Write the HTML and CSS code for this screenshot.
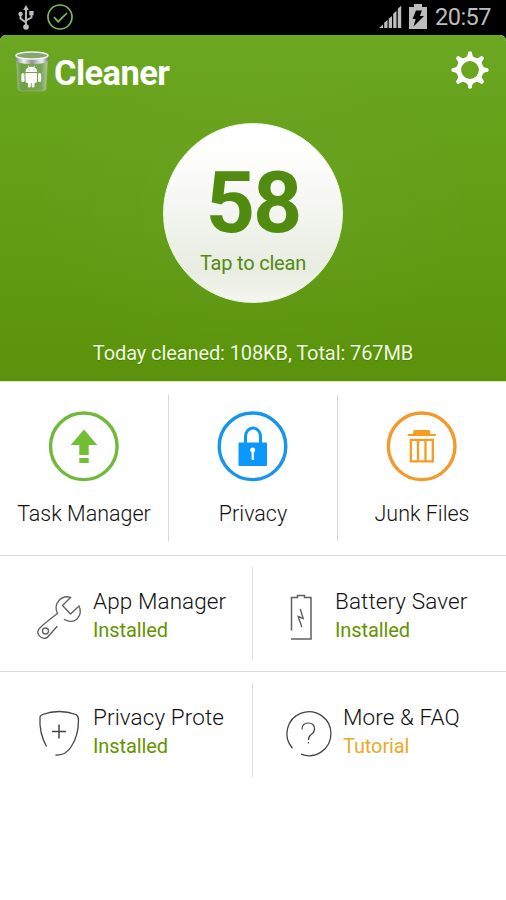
FILE: index.html
```html
<!DOCTYPE html>
<html lang="en">
<head>
<meta charset="utf-8">
<title>Cleaner</title>
<link rel="stylesheet" href="styles.css">
</head>
<body>
<header class="status">
  <svg class="usb" width="18" height="28" viewBox="17 3 18 28" fill="none" stroke="#bdbdbd" stroke-width="1.9">
    <path d="M26 27V8M26 22.500L20.500 18.500V14M26 20.500L31.500 17.500V12"/>
    <path d="M26 5l2.8 5h-5.6z" fill="#bdbdbd" stroke="none"/>
    <circle cx="26" cy="27" r="2.8" fill="#bdbdbd" stroke="none"/><circle cx="20.500" cy="14" r="2.200" fill="#bdbdbd" stroke="none"/>
    <path d="M29.300 11h4.300v4.300h-4.300z" fill="#bdbdbd" stroke="none"/>
  </svg>
  <svg class="check" width="28" height="28" viewBox="46 3 28 28" fill="none" stroke="#7cb955">
    <circle cx="60" cy="17" r="12" stroke-width="1.7"/><path d="M54 17.2l4.2 4.5 8.800-8.700" stroke-width="1.7"/>
  </svg>
  <svg class="signal" width="23" height="24" viewBox="379 5 23 24" fill="#bdbdbd">
    <path d="M379 28l4-3.500V28zM384.200 22.800l3.300-2.800v8h-3.300zM388.700 18.800l3.300-2.800v12h-3.300zM393.200 13.800l3.300-3V28h-3.300zM397.800 8.800l3.400-3V28h-3.400z"/>
  </svg>
  <svg class="charge" width="18" height="26" viewBox="409 3 18 26">
    <path d="M414 4h8v3h5v22h-18V7h5z" fill="#bdbdbd"/><path d="M416 10.500h6L419.800 16h4.200L413.500 26.500l2.200-7.500h-3.200z" fill="#000"/>
  </svg>
  <span class="clock">20:57</span>
</header>
<main>
  <section class="hero">
    <div class="titlebar">
      <svg class="jar" width="36" height="44" viewBox="14 49 36 44">
        <defs>
          <linearGradient id="glass"><stop offset="0" stop-color="#92b672"/><stop offset=".15" stop-color="#70a044"/><stop offset=".8" stop-color="#79a654"/><stop offset="1" stop-color="#b3c9a1"/></linearGradient>
          <linearGradient id="lid"><stop offset="0" stop-color="#858585"/><stop offset=".25" stop-color="#f1f1f1"/><stop offset=".5" stop-color="#929292"/><stop offset=".8" stop-color="#f0f0f0"/><stop offset="1" stop-color="#777"/></linearGradient>
        </defs>
        <path d="M16.500 60L18 89q0 2 4 2h20q4 0 4-2L47.500 60z" fill="url(#glass)" stroke="#9dba87" stroke-width=".6"/>
        <path d="M15.500 55v4.500q0 4.500 16.500 4.500t16.500-4.500V55z" fill="url(#lid)"/>
        <ellipse cx="32" cy="55.500" rx="16" ry="3.600" fill="#87a66b" stroke="#f4f4f4" stroke-width="1.500"/>
        <path d="M25.500 73h11.500v8q0 2-2 2h-.5v3q0 1.600-1.400 1.600T31.700 86v-3h-.9v3q0 1.600-1.400 1.600T28 86v-3h-.5q-2 0-2-2zM25.500 72q0-3.400 3.300-4.700l-1-1.400.5-.3 1.100 1.500q2-.6 4 0l1.100-1.500.5.3-1 1.400q3 1.300 3 4.700z" fill="#fff"/>
        <rect x="21.300" y="73" width="3.200" height="9" rx="1.500" fill="#fff"/><rect x="38" y="73" width="3.200" height="9" rx="1.500" fill="#fff"/>
        <circle cx="29" cy="69.800" r=".6" fill="#78a550"/><circle cx="33.800" cy="69.800" r=".6" fill="#78a550"/>
      </svg>
      <h1>Cleaner</h1>
      <svg class="gear" width="40" height="40" viewBox="-20 -20 40 40">
        <circle r="11.200" fill="none" stroke="#fff" stroke-width="4.600"/>
        <g fill="#fff"><path id="tooth" d="M-4.500-12q2.500-2 2.700-6 1.800-1.500 3.600 0 .2 4 2.700 6z"/><use href="#tooth" transform="rotate(45)"/><use href="#tooth" transform="rotate(90)"/><use href="#tooth" transform="rotate(135)"/><use href="#tooth" transform="rotate(180)"/><use href="#tooth" transform="rotate(225)"/><use href="#tooth" transform="rotate(270)"/><use href="#tooth" transform="rotate(315)"/></g>
      </svg>
    </div>
    <div class="score"><strong>58</strong><span>Tap to clean</span></div>
    <p class="total">Today cleaned: 108KB, Total: 767MB</p>
  </section>
  <section class="tools">
    <div class="tool">
      <svg width="72" height="72" viewBox="48 410 72 72"><circle cx="83.800" cy="446.300" r="33.300" fill="none" stroke="#70b93b" stroke-width="3.400"/><path d="M84 429.500L97.300 445H88.700v10h-9.400v-10h-8.600zM79.300 458h9.400v5h-9.400z" fill="#72bf36"/></svg>
      <span>Task Manager</span>
    </div>
    <div class="tool">
      <svg width="72" height="72" viewBox="217 410 72 72"><circle cx="252.500" cy="446.300" r="33.300" fill="none" stroke="#1695ed" stroke-width="3.400"/><path d="M245.500 443v-6.500a7.500 8.500 0 0 1 15 0v6.500" fill="none" stroke="#0c98fb" stroke-width="3"/><rect x="238.500" y="442.500" width="28.500" height="23.500" rx="1" fill="#0c98fb"/><circle cx="252.700" cy="450" r="2.500" fill="#fff"/><path d="M251.600 451h2.200v9h-2.200z" fill="#fff"/></svg>
      <span>Privacy</span>
    </div>
    <div class="tool">
      <svg width="72" height="72" viewBox="386 410 72 72"><circle cx="421.700" cy="446.300" r="33.300" fill="none" stroke="#f29a2c" stroke-width="3.400"/><path d="M407.700 434h5.500v-2.500q0-1.500 1.500-1.500h14q1.500 0 1.500 1.500v2.500h5.500v2h-28z" fill="#f79b22"/><path d="M410.800 439.800h22v21.500h-22zM418 439v22M425.500 439v22" fill="none" stroke="#f79b22" stroke-width="2.300"/></svg>
      <span>Junk Files</span>
    </div>
  </section>
  <section class="apps">
    <div class="app app-left">
      <svg width="56" height="56" viewBox="32 589 56 56" fill="none" stroke="#606060" stroke-width="1.350" stroke-linecap="round"><path d="M57 626.500L49.500 635Q46 640 41.500 637.500Q37 635 38 630.500Q39.500 627 57.500 613.500Q54 606 59 600.500Q64 595 70.500 597.500L62.500 605.500L70.500 614L79 606Q82.500 613 77 619Q72 623.500 64.300 619.500"/><circle cx="45.500" cy="631" r="3"/></svg>
      <div class="copy"><b>App Manager</b><span>Installed</span></div>
    </div>
    <div class="app app-battery">
      <svg width="30" height="56" viewBox="286 589 30 56" fill="none" stroke="#606060" stroke-width="1.500"><path d="M291.500 630.500V597.500h6v-2h7v2h6.500v41.500h-20"/><path d="M300.200 609l3 9.500-5-2 3.600 10.500" stroke-width="1.400"/></svg>
      <div class="copy"><b>Battery Saver</b><span>Installed</span></div>
    </div>
  </section>
  <section class="apps last">
    <div class="app app-left">
      <svg width="56" height="56" viewBox="32 705 56 56" fill="none" stroke="#444" stroke-width="1.300"><path d="M46.500 746.500Q39 733 40 717Q40.500 715.500 42.500 714.500Q59 708.500 76 714.500Q78.500 716 78.500 720Q78.500 736 71 747Q65 756 55.500 755"/><path d="M52 731.500h14M59 724.500v14" stroke-width="1.500"/></svg>
      <div class="copy"><b>Privacy Prote</b><span>Installed</span></div>
    </div>
    <div class="app app-faq">
      <svg width="50" height="56" viewBox="284 705 50 56" fill="none" stroke="#444" stroke-width="1.300"><path d="M292.500 748.300A22 22 0 1 1 301 754.200"/><path d="M302 729.500q0-6.500 6.300-6.500t6.200 6q0 3.500-3.300 5.500-2.700 2-2.700 5.500M308.500 742v1.500" stroke-width="1.200"/></svg>
      <div class="copy"><b>More &amp; FAQ</b><span class="tutorial">Tutorial</span></div>
    </div>
  </section>
</main>
</body>
</html>
```

FILE: styles.css
```css
* { box-sizing: border-box; }
body { margin: 0; background: #000; font-family: Roboto, sans-serif; color: #111; }
svg { display: block; flex: none; }
main { height: 865px; background: #fff; border-radius: 6px 6px 0 0; overflow: hidden; }
.status { display: flex; height: 35px; padding: 3px 15px 0 17px; color: #bdbdbd; }
.check { margin-left: 11px; }
.signal { margin: 2px 7px 0 auto; }
.clock { width: 56px; margin-left: 8px; font-size: 23.500px; line-height: 29px; letter-spacing: -.5px; white-space: nowrap; }
.hero { height: 346.500px; border-bottom: 1px solid #d7efb4; background: radial-gradient(ellipse at 50% 50%, #ffffff08, transparent 65%), linear-gradient(#6ca721, #5a930b); }
.titlebar { display: flex; height: 87.500px; padding: 14px 16px 0 14px; }
h1 { margin: 3px 0 0 4px; color: #fff; font-size: 34.500px; line-height: 42px; letter-spacing: -.6px; }
.gear { margin: 1px 0 0 auto; }
.score { display: flex; flex-direction: column; align-items: center; width: 180px; height: 180px; margin: 0 auto; padding-top: 31px; border: 1px solid #edf5e4; border-radius: 50%; background: linear-gradient(#fff 0%, #fdfdfc 22%, #e8ece1 82%, #f6f6f0); color: #518b0f; }
.score strong { font-size: 86px; line-height: 96px; letter-spacing: -2px; }
.score span { font-size: 20px; line-height: 24px; letter-spacing: -.2px; white-space: nowrap; }
.total { margin: 38.500px 0 0; color: #f0f9df; text-align: center; font-size: 20px; line-height: 24px; letter-spacing: -.1px; text-shadow: 0 1px 1px #32600066; white-space: nowrap; }
.tools { display: grid; grid-template-columns: 169px 169px 168px; height: 174.500px; padding: 13.500px 0 14px; border-bottom: 1px solid #d9d9d9; }
.tool { display: flex; flex-direction: column; align-items: center; padding-top: 15px; border-right: 1px solid #d9d9d9; }
.tool:last-child { border: 0; }
.tool span { margin-top: 18px; font-weight: 350; font-size: 21.500px; line-height: 28px; white-space: nowrap; }
.apps { display: grid; grid-template-columns: 253px 253px; height: 116px; padding: 11px 0; border-bottom: 1px solid #d9d9d9; }
.last { border: 0; }
.app { display: flex; padding-top: 22px; }
.app-left { padding-left: 32px; border-right: 1px solid #ddd; }
.app-battery { padding-left: 33px; }
.app-faq { padding-left: 31px; }
.copy { display: flex; flex-direction: column; margin: -2px 0 0 5px; white-space: nowrap; }
.app-battery .copy { margin-left: 19px; }
.app-faq .copy { margin-left: 9px; }
.copy b { font-weight: 350; font-size: 22.500px; line-height: 29px; letter-spacing: .1px; }
.copy span { color: #639400; font-size: 20px; line-height: 28px; letter-spacing: -.1px; }
.copy .tutorial { color: #e8aa28; }
```
